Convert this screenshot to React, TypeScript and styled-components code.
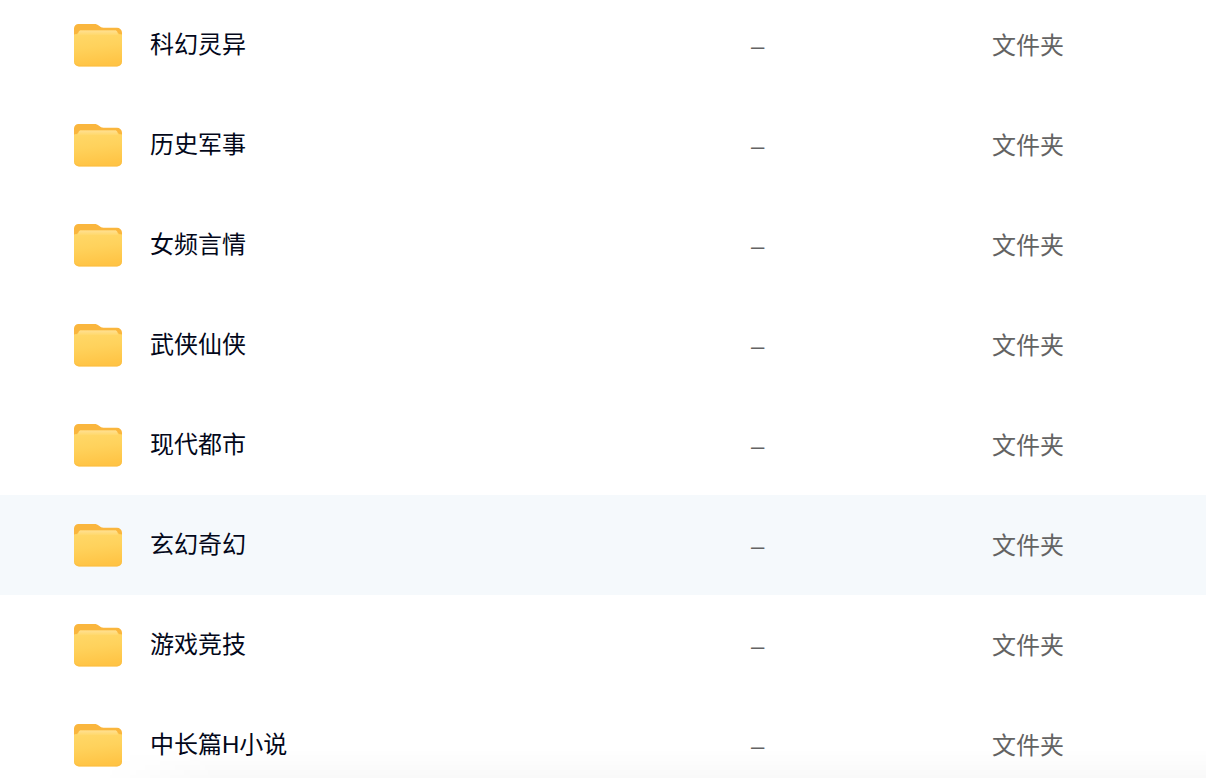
import React from "react";
import styled, { createGlobalStyle } from "styled-components";

const GlobalStyle = createGlobalStyle`
  body {
    margin: 0;
    background: #ffffff;
    font-family: "Liberation Sans", "Noto Sans CJK SC", sans-serif;
  }
`;

const Viewport = styled.main`
  height: 100vh;
  overflow: hidden;
`;

const FileTable = styled.table`
  width: 100%;
  margin-top: -5px;
  table-layout: fixed;
  border-collapse: collapse;
  font-size: 24px;
  line-height: 36px;
`;

const NameColumn = styled.col``;

const MetaColumn = styled.col<{ $width: number }>`
  width: ${({ $width }) => $width}px;
`;

const Row = styled.tr<{ $active?: boolean }>`
  height: 100px;
  background: ${({ $active }) => ($active ? "#f5f9fc" : "transparent")};
`;

const NameCell = styled.td`
  padding: 0 24px 0 74px;
`;

const NameContent = styled.div`
  display: flex;
  align-items: center;
  gap: 28px;
`;

const FileName = styled.span`
  color: #03081a;
  white-space: nowrap;
`;

const MetaCell = styled.td`
  padding: 2px 0 0;
  color: #636363;
`;

const BottomShade = styled.div`
  position: fixed;
  right: 0;
  bottom: 0;
  left: 0;
  height: 30px;
  background: linear-gradient(rgba(0, 0, 0, 0), rgba(0, 0, 0, 0.025));
  mask-image: linear-gradient(to right, transparent 100px, #000 220px);
  pointer-events: none;
`;

const IconSvg = styled.svg`
  display: block;
  flex: none;
`;

function FolderIcon({ id }: { id: string }) {
  return (
    <IconSvg width="48" height="44" viewBox="0 0 48 44" aria-hidden="true">
      <defs>
        <linearGradient id={`${id}-front`} x1="0" y1="0" x2="0.15" y2="1">
          <stop offset="0" stopColor="#ffd96b" />
          <stop offset="0.5" stopColor="#ffd25c" />
          <stop offset="1" stopColor="#ffc445" />
        </linearGradient>
        <linearGradient id={`${id}-edge`} x1="0" y1="0" x2="0" y2="1">
          <stop offset="0" stopColor="#ffdf91" />
          <stop offset="1" stopColor="#ffd96b" />
        </linearGradient>
      </defs>
      <path
        d="M0 5.500a4.500 4.500 0 0 1 4.500-4.500H20c2.500 0 3.500.6 5 1.800s2.500 1.900 4.500 1.900H43a5 5 0 0 1 5 5V20H0z"
        fill="#fab63d"
      />
      <path
        d="M0 11.500c3.500-.3 4.200-1.200 4.600-2.500C5 8 5.500 7.500 7 7.500h34c1.500 0 2 .5 2.400 1.500.4 1.300 1.100 2.200 4.600 2.500V38.500a5 5 0 0 1-5 5H5a5 5 0 0 1-5-5z"
        fill={`url(#${id}-front)`}
      />
      <path
        d="M4 12c.4-1 .5-2 .8-3 .3-1 .9-1.500 2.200-1.500h34c1.300 0 1.900.5 2.200 1.500.3 1 .4 2 .8 3z"
        fill={`url(#${id}-edge)`}
      />
      <path
        d="M0 37v1.500a5 5 0 0 0 5 5h38a5 5 0 0 0 5-5V37a5 5 0 0 1-5 5H5a5 5 0 0 1-5-5z"
        fill="#fbbb3f"
        opacity="0.5"
      />
    </IconSvg>
  );
}

const folders = [
  { name: "科幻灵异" },
  { name: "历史军事" },
  { name: "女频言情" },
  { name: "武侠仙侠" },
  { name: "现代都市" },
  { name: "玄幻奇幻", active: true },
  { name: "游戏竞技" },
  { name: "中长篇H小说" },
];

export default function App() {
  return (
    <Viewport lang="zh-CN">
      <GlobalStyle />
      <FileTable>
        <colgroup>
          <NameColumn />
          <MetaColumn $width={241} />
          <MetaColumn $width={214} />
        </colgroup>
        <tbody>
          {folders.map(({ name, active }, index) => (
            <Row key={name} $active={active}>
              <NameCell>
                <NameContent>
                  <FolderIcon id={`folder-${index}`} />
                  <FileName>{name}</FileName>
                </NameContent>
              </NameCell>
              <MetaCell>–</MetaCell>
              <MetaCell>文件夹</MetaCell>
            </Row>
          ))}
        </tbody>
      </FileTable>
      <BottomShade />
    </Viewport>
  );
}
